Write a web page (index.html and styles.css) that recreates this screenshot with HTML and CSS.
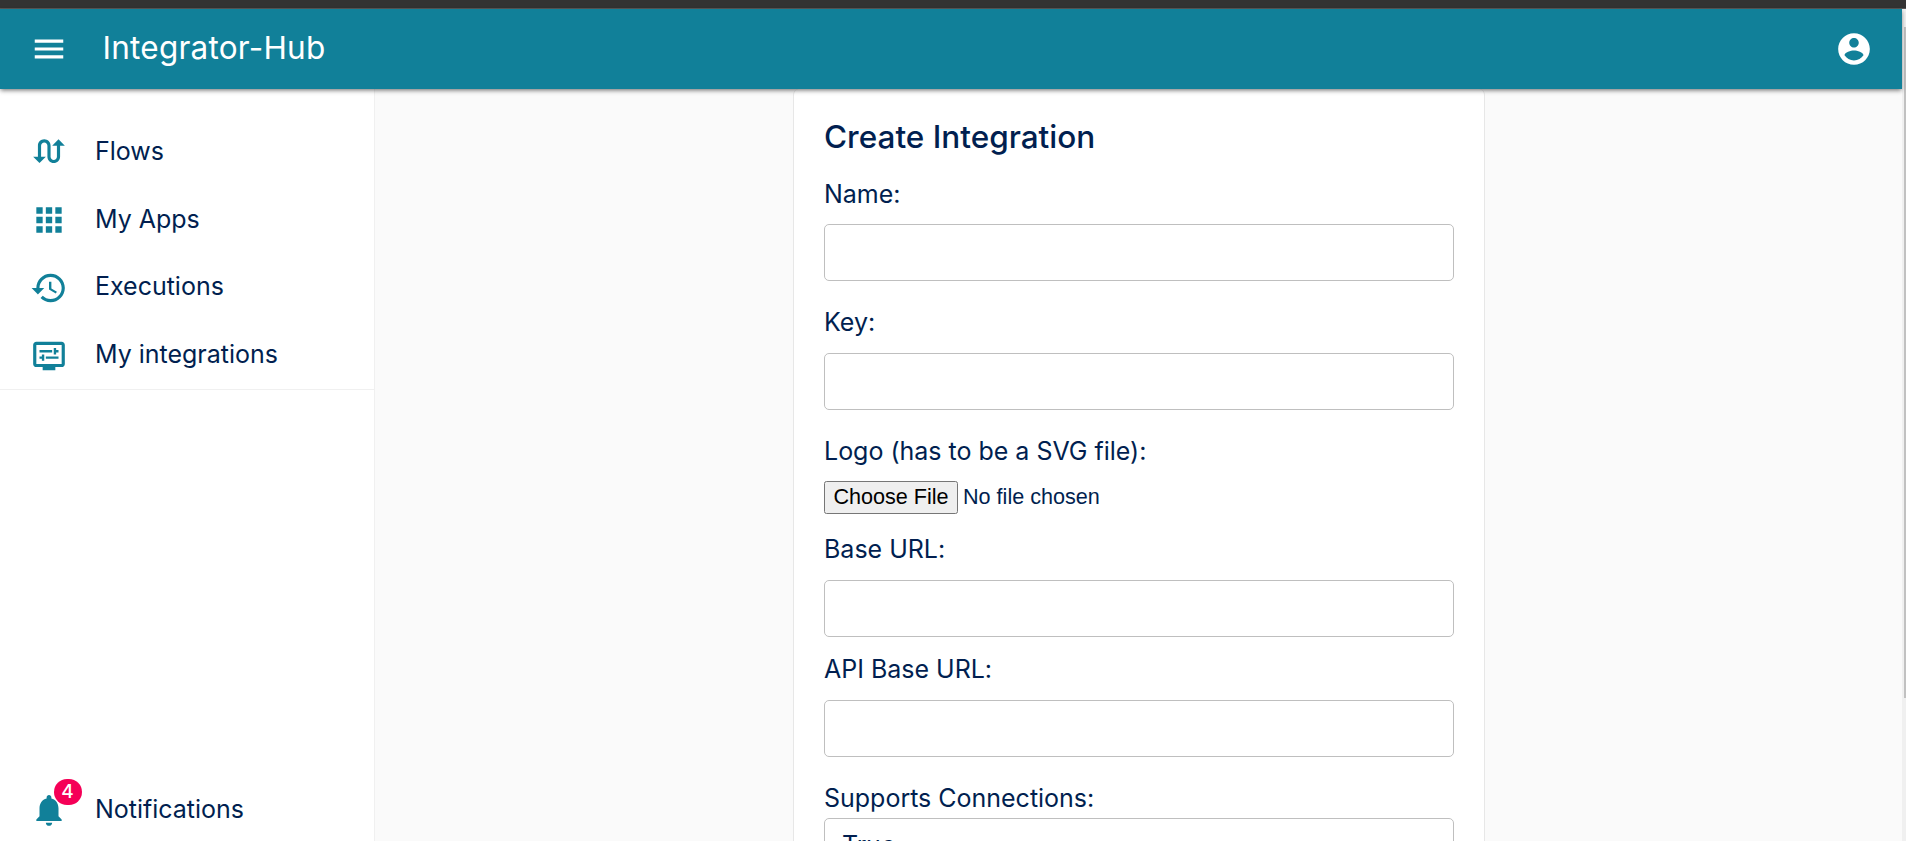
FILE: index.html
```html
<!DOCTYPE html>
<html lang="en">
<head>
<meta charset="utf-8">
<title>Integrator-Hub</title>
<link rel="stylesheet" href="styles.css">
</head>
<body>
<div class="topline"></div>
<div class="shell">
  <div class="app">
    <header class="appbar">
      <svg class="icon" viewBox="0 0 24 24"><path d="M3 18h18v-2H3v2zm0-5h18v-2H3v2zm0-7v2h18V6H3z"/></svg>
      <span class="brand">Integrator-Hub</span>
      <svg class="icon" viewBox="0 0 24 24"><path d="M12 2C6.48 2 2 6.48 2 12s4.48 10 10 10 10-4.480 10-10S17.520 2 12 2zm0 3c1.660 0 3 1.340 3 3s-1.340 3-3 3-3-1.340-3-3 1.340-3 3-3zm0 14.200c-2.500 0-4.710-1.280-6-3.220.03-1.990 4-3.080 6-3.080 1.990 0 5.970 1.090 6 3.080-1.290 1.940-3.500 3.220-6 3.220z"/></svg>
    </header>
    <div class="body">
      <nav class="sidebar">
        <ul class="menu">
          <li class="item"><svg class="icon" viewBox="0 0 24 24"><path d="M18 4l-4 4h3v7c0 1.100-.9 2-2 2s-2-.9-2-2V8c0-2.210-1.790-4-4-4S5 5.790 5 8v7H2l4 4 4-4H7V8c0-1.100.9-2 2-2s2 .9 2 2v7c0 2.210 1.790 4 4 4s4-1.790 4-4V8h3l-4-4z"/></svg><span>Flows</span></li>
          <li class="item"><svg class="icon" viewBox="0 0 24 24"><path d="M4 8h4V4H4v4zm6 12h4v-4h-4v4zm-6 0h4v-4H4v4zm0-6h4v-4H4v4zm6 0h4v-4h-4v4zm6-10v4h4V4h-4zm-6 4h4V4h-4v4zm6 6h4v-4h-4v4zm0 6h4v-4h-4v4z"/></svg><span>My Apps</span></li>
          <li class="item"><svg class="icon" viewBox="0 0 24 24"><path d="M13 3c-4.970 0-9 4.030-9 9H1l3.890 3.890.07.14L9 12H6c0-3.870 3.130-7 7-7s7 3.130 7 7-3.130 7-7 7c-1.930 0-3.680-.79-4.940-2.060l-1.420 1.420C8.270 19.990 10.510 21 13 21c4.970 0 9-4.030 9-9s-4.030-9-9-9zm-1 5v5l4.280 2.540.72-1.210-3.500-2.080V8H12z"/></svg><span>Executions</span></li>
          <li class="item"><svg class="icon" viewBox="0 0 24 24"><path d="M20 3H4c-1.110 0-2 .89-2 2v12c0 1.100.89 2 2 2h4v2h8v-2h4c1.100 0 2-.9 2-2V5c0-1.110-.9-2-2-2zm0 14H4V5h16v12z"/><path d="M6 8.250h8v1.500H6zM16.500 9.750H18v-1.500h-1.500V7H15v4h1.500zM10 12.250h8v1.500h-8zM7.500 15H9v-4H7.500v1.250H6v1.500h1.500z"/></svg><span>My integrations</span></li>
        </ul>
        <div class="item notifications">
          <span class="bell"><svg class="icon" viewBox="0 0 24 24"><path d="M12 22c1.100 0 2-.9 2-2h-4c0 1.100.89 2 2 2zm6-6v-5c0-3.070-1.640-5.640-4.500-6.320V4c0-.83-.67-1.500-1.500-1.500s-1.500.67-1.500 1.500v.68C7.630 5.360 6 7.920 6 11v5l-2 2v1h16v-1l-2-2z"/></svg><span class="badge">4</span></span>
          <span>Notifications</span>
        </div>
      </nav>
      <main class="content">
        <form class="card">
          <h1 class="title">Create Integration</h1>
          <label class="label" for="name">Name:</label>
          <input class="field name" id="name" type="text">
          <label class="label" for="key">Key:</label>
          <input class="field" id="key" type="text">
          <label class="label" for="logo">Logo (has to be a SVG file):</label>
          <input class="file" id="logo" type="file">
          <label class="label base" for="base">Base URL:</label>
          <input class="field" id="base" type="text">
          <label class="label api" for="api">API Base URL:</label>
          <input class="field" id="api" type="text">
          <span class="label">Supports Connections:</span>
          <div class="select">True</div>
        </form>
      </main>
    </div>
  </div>
  <div class="scrollbar"><div class="thumb"></div></div>
</div>
</body>
</html>
```
FILE: styles.css
```css
* { box-sizing: border-box; }

body {
  margin: 0;
  height: 841px;
  overflow: hidden;
  display: flex;
  flex-direction: column;
  font-family: Inter, "Liberation Sans", sans-serif;
  font-size: 25px;
  font-weight: 400;
  letter-spacing: -0.01px;
  color: #011f50;
  background: #fafafa;
}

.topline {
  flex: none;
  height: 9px;
  background: #333;
  border-bottom: 1px solid #585858;
}

.shell { flex: 1; min-height: 0; display: flex; }

.app {
  flex: 1;
  min-width: 0;
  display: flex;
  flex-direction: column;
}

.appbar {
  flex: none;
  position: relative;
  z-index: 1;
  height: 80px;
  padding: 0 29.5px 0 30px;
  display: flex;
  align-items: center;
  color: #fff;
  background: #118099;
  box-shadow: 0 2px 4px -1px rgba(0, 0, 0, .4), 0 2px 5px rgba(0, 0, 0, .2);
}

.icon { flex: none; display: block; width: 38px; height: 38px; fill: currentColor; }

.brand {
  flex: 1;
  margin-left: 34.5px;
  padding-bottom: 2px;
  font-size: 31.5px;
  font-weight: 400;
  letter-spacing: 0.0075em;
  line-height: 40px;
}

.body { flex: 1; min-height: 0; display: flex; }

.sidebar {
  flex: none;
  width: 375px;
  display: flex;
  flex-direction: column;
  justify-content: space-between;
  background: #fff;
  border-right: 1px solid #f0f0f0;
}

.menu {
  margin: 0;
  padding: 28px 0 1px;
  list-style: none;
  border-bottom: 1px solid #f0f0f0;
}

.item {
  height: 67.8px;
  padding-left: 30px;
  display: flex;
  align-items: center;
  gap: 27px;
  line-height: 32px;
}

.item .icon { margin-top: 3px; color: #118099; }

.notifications { height: 64px; }
.notifications .icon { margin-top: 1px; }

.bell { position: relative; }

.badge {
  position: absolute;
  left: 23.5px;
  top: -11px;
  width: 28px;
  height: 26px;
  border-radius: 13px;
  background: #f50057;
  color: #fff;
  font-size: 19px;
  font-weight: 500;
  line-height: 25px;
  text-align: center;
}

.content { flex: 1; display: flex; padding-left: 418px; }

.card {
  width: 692px;
  padding: 28px 30px 0;
  display: flex;
  flex-direction: column;
  background: #fff;
  border: solid #e7e7e7;
  border-width: 0 1px;
  border-radius: 6px 6px 0 0;
}

.title {
  margin: 0 0 -4px;
  font-size: 31.5px;
  font-weight: 500;
  letter-spacing: 0;
  line-height: 40px;
}

.label { flex: none; margin-top: 26px; line-height: 30px; }
.base { margin-top: 20px; }
.api { margin-top: 17px; }

.field {
  flex: none;
  height: 57px;
  margin: 16px 0 0;
  padding: 0 18px;
  border: 1px solid #bfbfbf;
  border-radius: 5px;
  outline: none;
  background: #fff;
  font: inherit;
}

.name { margin-top: 15px; }

.file {
  flex: none;
  height: 33px;
  margin-top: 15px;
  font: 21.6px "Liberation Sans", sans-serif;
  line-height: 31px;
  color: #011f50;
}

.file::file-selector-button {
  width: 134px;
  height: 33px;
  margin: 0 5px 0 0;
  padding: 0 0 1px;
}

.select {
  flex: none;
  height: 57px;
  margin-top: 5px;
  padding: 0 17px;
  border: 1px solid #bfbfbf;
  border-radius: 5px;
  line-height: 53px;
}

.scrollbar {
  flex: none;
  width: 4px;
  padding: 18px 0 0 2px;
  background: #f0f0f0;
}

.thumb { height: 671px; background: #c1c1c1; }
```
